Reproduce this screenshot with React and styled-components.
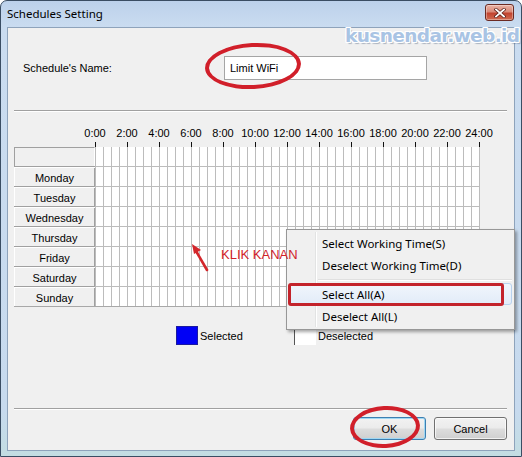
import React from 'react'
import styled, { createGlobalStyle } from 'styled-components'

const GlobalStyle = createGlobalStyle`
  html, body {
    margin: 0;
    padding: 0;
    background: #fff;
    overflow: hidden;
  }
  body {
    font-family: "Liberation Sans", Arial, sans-serif;
  }
`

const days = ['Monday', 'Tuesday', 'Wednesday', 'Thursday', 'Friday', 'Saturday', 'Sunday']
const hours = Array.from({ length: 13 }, (_, i) => `${i * 2}:00`)

const App = () => {
  return (
    <>
      <GlobalStyle />
      <Window>
        <TitleBar>
          <Title>Schedules Setting</Title>
          <CloseButton>
            <svg width="12" height="10" viewBox="0 0 12 10">
              <path d="M2 1.5 L10 8.5 M10 1.5 L2 8.5" stroke="#5a1e18" strokeWidth="3.2" strokeLinecap="square" />
              <path d="M2 1.5 L10 8.5 M10 1.5 L2 8.5" stroke="#fff" strokeWidth="1.8" strokeLinecap="square" />
            </svg>
          </CloseButton>
        </TitleBar>

        <Body>
          <NameRow>
            <FieldLabel>Schedule's Name:</FieldLabel>
            <NameInput readOnly value="Limit WiFi" />
          </NameRow>

          <Separator $top={30} />

          <Schedule>
            <HourRow>
              {hours.map((h) => (
                <HourLabel key={h}>{h}</HourLabel>
              ))}
            </HourRow>
            <TickRow />
            <Row $header>
              <BlankCell />
              <Timeline $header />
            </Row>
            <DayRows>
              {days.map((d) => (
                <Row key={d}>
                  <DayCell>{d}</DayCell>
                  <Timeline />
                </Row>
              ))}
            </DayRows>
          </Schedule>

          <Legend>
            <LegendItem>
              <Swatch $color="#0000f6" />
              <span>Selected</span>
            </LegendItem>
            <LegendItem>
              <Swatch $color="#fff" $empty />
              <span>Deselected</span>
            </LegendItem>
          </Legend>

          <Separator $top={63} />

          <ButtonRow>
            <Button $primary>OK</Button>
            <Button>Cancel</Button>
          </ButtonRow>
        </Body>

        <Watermark>kusnendar.web.id</Watermark>

        <ContextMenu>
          <MenuItem>Select Working Time(S)</MenuItem>
          <MenuItem>Deselect Working Time(D)</MenuItem>
          <MenuSeparator />
          <MenuItem $active>Select All(A)</MenuItem>
          <MenuItem>Deselect All(L)</MenuItem>
          <Marker />
        </ContextMenu>

        {/* annotations drawn over the screenshot */}
        <Hint>KLIK KANAN</Hint>
        <Arrow width="30" height="40" viewBox="0 0 30 40">
          <path d="M22 30 L11 11" stroke="#d3262b" strokeWidth="2.6" strokeLinecap="round" />
          <path d="M7 4 L16 10 L9 14 Z" fill="#d3262b" />
        </Arrow>
        <Ellipse $left={204} $top={42} $w={96} $h={46} />
        <Ellipse $left={349} $top={405} $w={70} $h={42} />
      </Window>
    </>
  )
}

const Window = styled.div`
  position: relative;
  box-sizing: border-box;
  width: 522px;
  height: 457px;
  display: flex;
  flex-direction: column;
  padding: 0 6px 5px;
  border: 1px solid #3a4d63;
  border-radius: 7px 7px 0 0;
  background: linear-gradient(#bcd1eb, #cadcf0 26px, #c7daee 90%, #c3dde2);
  overflow: hidden;
`

const TitleBar = styled.div`
  height: 26px;
  display: flex;
  justify-content: space-between;
  align-items: flex-start;
`

const Title = styled.div`
  font-family: "Noto Sans", "DejaVu Sans", sans-serif;
  font-size: 11.5px;
  line-height: 26px;
  color: #000;
`

const CloseButton = styled.div`
  box-sizing: border-box;
  width: 29px;
  height: 17px;
  margin-top: 3px;
  margin-right: 1px;
  display: flex;
  align-items: center;
  justify-content: center;
  border: 1px solid #6b2a22;
  border-radius: 3px;
  background: linear-gradient(#eab3a6, #d98a79 45%, #c2432f 55%, #d06c52);
  box-shadow: inset 0 0 0 1px rgba(255, 255, 255, 0.35);
`

const Body = styled.div`
  flex: 1;
  display: flex;
  flex-direction: column;
  background: #f0f0f0;
  border: 1px solid #8ea3bb;
  font-size: 11px;
  color: #000;
`

const NameRow = styled.div`
  display: flex;
  align-items: center;
  height: 24px;
  margin-top: 28px;
  padding-left: 15px;
`

const FieldLabel = styled.div`
  width: 201px;
`

const NameInput = styled.input`
  box-sizing: border-box;
  width: 203px;
  height: 24px;
  margin: 0;
  padding: 0 5px;
  border: 1px solid #a5a5a5;
  background: #fff;
  font-family: "Liberation Sans", Arial, sans-serif;
  font-size: 11px;
  color: #000;
  outline: none;
`

const Separator = styled.div`
  margin: ${(p) => p.$top}px 7px 0 6px;
  border-top: 1px solid #a0a0a0;
  border-bottom: 1px solid #fff;
`

const Schedule = styled.div`
  margin: 14px 0 0 6px;
`

const HourRow = styled.div`
  display: flex;
  padding-left: 65px;
  height: 16px;
`

const HourLabel = styled.div`
  width: 32px;
  text-align: center;
  line-height: 14px;
`

const TickRow = styled.div`
  width: 385px;
  height: 5px;
  margin-left: 81px;
  background: repeating-linear-gradient(to right, #111 0 1px, transparent 1px 32px);
`

const Row = styled.div`
  display: flex;
  height: ${(p) => (p.$header ? 19 : 20)}px;
`

const BlankCell = styled.div`
  box-sizing: border-box;
  width: 81px;
  border: 1px solid #a0a0a0;
  border-right-color: #fff;
  border-bottom: none;
  background: #f0f0f0;
`

const Timeline = styled.div`
  box-sizing: border-box;
  width: 385px;
  background: repeating-linear-gradient(to right, #bcbcbc 0 1px, #fff 1px 8px);
  border-top: ${(p) => (p.$header ? 'none' : '1px solid #bcbcbc')};
`

const DayRows = styled.div`
  width: 466px;
  border-bottom: 1px solid #a8a8a8;
`

const DayCell = styled.div`
  box-sizing: border-box;
  width: 81px;
  display: flex;
  align-items: center;
  justify-content: center;
  padding-top: 2px;
  background: #f0f0f0;
  border-top: 1px solid #a0a0a0;
  box-shadow: inset 1px 1px 0 #fff, inset -1px 0 0 #a0a0a0;
  font-size: 11px;
`

const Legend = styled.div`
  display: flex;
  height: 19px;
  margin-top: 19px;
  padding-left: 168px;
`

const LegendItem = styled.div`
  width: 118px;
  display: flex;
  align-items: center;
  gap: 2px;
`

const Swatch = styled.div`
  box-sizing: border-box;
  width: 22px;
  height: 19px;
  background: ${(p) => p.$color};
  border: ${(p) => (p.$empty ? 'none' : '1px solid #1a1aa0')};
  border-left: ${(p) => (p.$empty ? '1px solid #555' : '1px solid #1a1aa0')};
`

const ButtonRow = styled.div`
  display: flex;
  justify-content: flex-end;
  gap: 8px;
  margin-top: 7px;
  padding-right: 7px;
`

const Button = styled.div`
  box-sizing: border-box;
  width: 73px;
  height: 23px;
  display: flex;
  align-items: center;
  justify-content: center;
  border: 1px solid ${(p) => (p.$primary ? '#3c7fb1' : '#707070')};
  border-radius: 3px;
  background: linear-gradient(#f2f2f2, #ebebeb 48%, #dddddd 52%, #cfcfcf);
  box-shadow: inset 0 0 0 1px ${(p) => (p.$primary ? '#9fd7f3' : 'rgba(255,255,255,0.7)')};
  font-size: 11px;
`

const Watermark = styled.div`
  position: absolute;
  left: 344px;
  top: 24px;
  font-family: "DejaVu Sans", sans-serif;
  font-weight: bold;
  font-size: 18.5px;
  letter-spacing: -0.6px;
  color: #a9c4e4;
  text-shadow: 1px 0 0 #fff, -1px 0 0 #fff, 0 1px 0 #fff, 0 -1px 0 #fff,
    1px 1px 0 #fff, -1px -1px 0 #fff, 1px -1px 0 #fff, -1px 1px 0 #fff,
    2px 2px 1px rgba(70, 90, 120, 0.4);
`

const Hint = styled.div`
  position: absolute;
  left: 220px;
  top: 246px;
  font-size: 13px;
  color: #d2232a;
`

const Arrow = styled.svg`
  position: absolute;
  left: 184px;
  top: 239px;
`

const ContextMenu = styled.div`
  position: absolute;
  left: 285px;
  top: 228px;
  box-sizing: border-box;
  width: 229px;
  padding: 2px;
  border: 1px solid #979797;
  background: #f0f0f0;
  box-shadow: 2px 2px 3px rgba(0, 0, 0, 0.35);
  font-family: "Noto Sans", "DejaVu Sans", sans-serif;
  font-size: 11.5px;

  &::before {
    content: '';
    position: absolute;
    left: 28px;
    top: 2px;
    bottom: 2px;
    width: 1px;
    background: #e2e3e3;
    box-shadow: 1px 0 0 #fff;
  }
`

const MenuItem = styled.div`
  position: relative;
  box-sizing: border-box;
  height: 22px;
  padding-left: 32px;
  line-height: 21px;
  color: #000;
  border-radius: 3px;
  background: ${(p) => (p.$active ? 'linear-gradient(#f1f6fc, #e2ecf8)' : 'transparent')};
  border: 1px solid ${(p) => (p.$active ? '#b8d2ee' : 'transparent')};
`

const MenuSeparator = styled.div`
  height: 7px;
  margin-left: 29px;
  display: flex;
  align-items: center;

  &::after {
    content: '';
    flex: 1;
    border-top: 1px solid #e0e0e0;
    border-bottom: 1px solid #fff;
  }
`

const Marker = styled.div`
  position: absolute;
  left: 1px;
  top: 53px;
  width: 216px;
  height: 23px;
  box-sizing: border-box;
  border: 3px solid #c3232b;
  border-radius: 3px;
`

const Ellipse = styled.div`
  position: absolute;
  left: ${(p) => p.$left}px;
  top: ${(p) => p.$top}px;
  width: ${(p) => p.$w}px;
  height: ${(p) => p.$h}px;
  box-sizing: border-box;
  border: 4px solid #d11f2a;
  border-radius: 50%;
  transform: rotate(-3deg);
`

export default App
